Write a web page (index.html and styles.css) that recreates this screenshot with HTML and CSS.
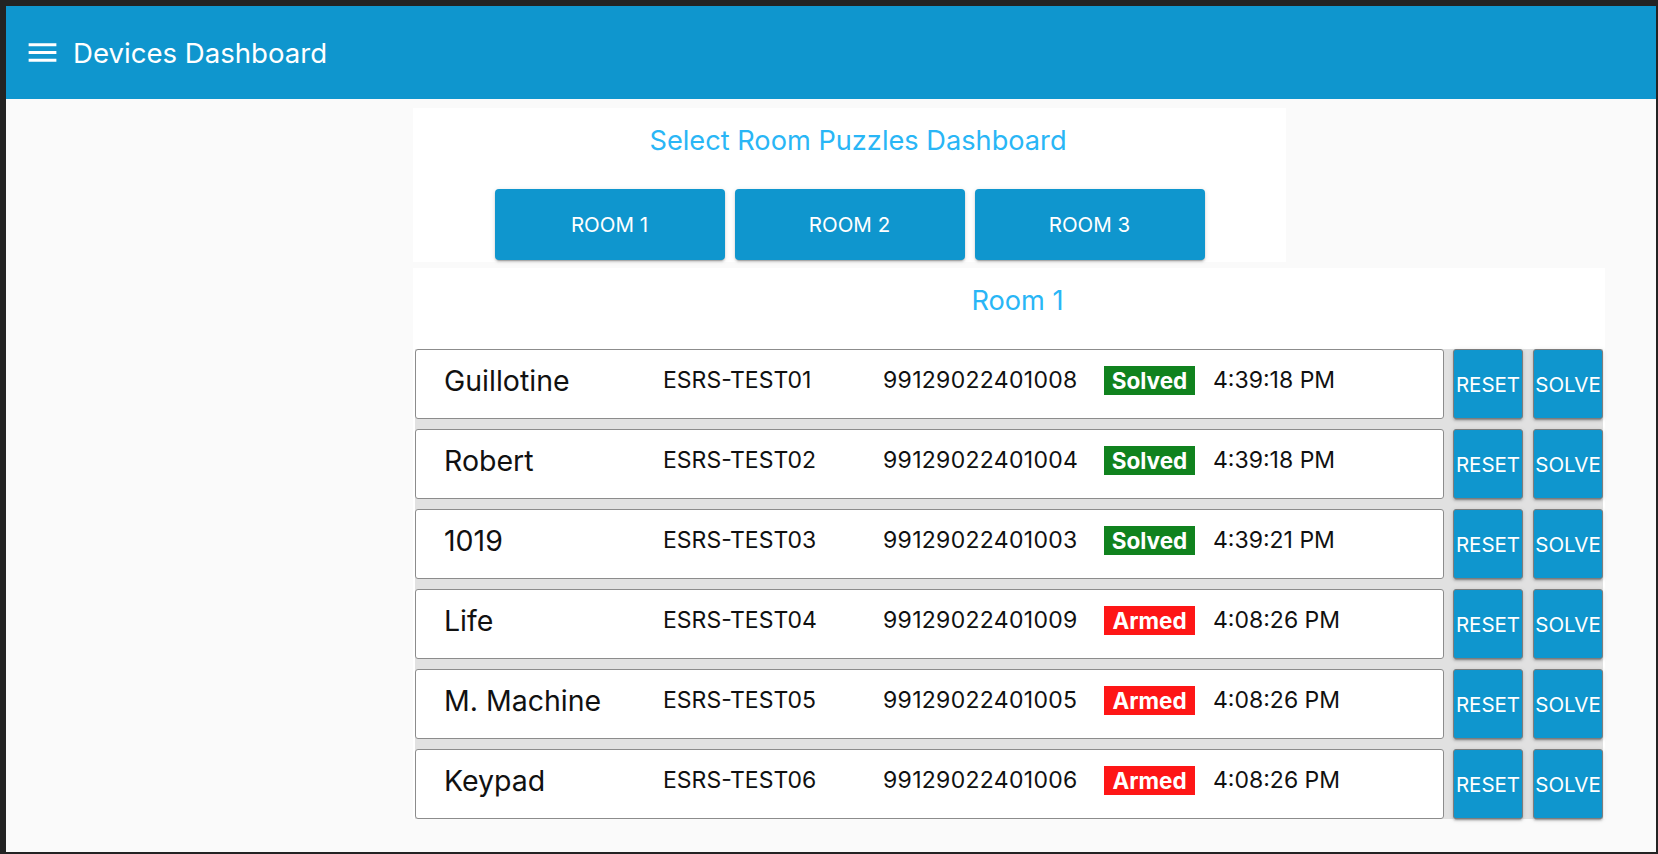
FILE: index.html
```html
<!DOCTYPE html>
<html lang="en">
<head>
<meta charset="utf-8">
<title>Devices Dashboard</title>
<link rel="stylesheet" href="styles.css">
</head>
<body>
<div class="window">
  <header class="appbar">
    <svg class="menu-icon" viewBox="0 0 24 24" aria-hidden="true"><path d="M3 18h18v-2H3v2zm0-5h18v-2H3v2zm0-7v2h18V6H3z"/></svg>
    <h1 class="appbar-title">Devices Dashboard</h1>
  </header>
  <main class="content">
    <section class="card card-select">
      <h2 class="card-title">Select Room Puzzles Dashboard</h2>
      <div class="room-buttons">
        <button class="room-btn">ROOM 1</button>
        <button class="room-btn">ROOM 2</button>
        <button class="room-btn">ROOM 3</button>
      </div>
    </section>
    <section class="card card-room">
      <h2 class="card-title">Room 1</h2>
      <div class="device-list">
        <div class="device-row">
          <div class="device">
            <span class="d-name">Guillotine</span>
            <span class="d-id">ESRS-TEST01</span>
            <span class="d-serial">99129022401008</span>
            <span class="badge solved">Solved</span>
            <span class="d-time">4:39:18 PM</span>
          </div>
          <button class="act-btn">RESET</button>
          <button class="act-btn">SOLVE</button>
        </div>
        <div class="device-row">
          <div class="device">
            <span class="d-name">Robert</span>
            <span class="d-id">ESRS-TEST02</span>
            <span class="d-serial">99129022401004</span>
            <span class="badge solved">Solved</span>
            <span class="d-time">4:39:18 PM</span>
          </div>
          <button class="act-btn">RESET</button>
          <button class="act-btn">SOLVE</button>
        </div>
        <div class="device-row">
          <div class="device">
            <span class="d-name">1019</span>
            <span class="d-id">ESRS-TEST03</span>
            <span class="d-serial">99129022401003</span>
            <span class="badge solved">Solved</span>
            <span class="d-time">4:39:21 PM</span>
          </div>
          <button class="act-btn">RESET</button>
          <button class="act-btn">SOLVE</button>
        </div>
        <div class="device-row">
          <div class="device">
            <span class="d-name">Life</span>
            <span class="d-id">ESRS-TEST04</span>
            <span class="d-serial">99129022401009</span>
            <span class="badge armed">Armed</span>
            <span class="d-time">4:08:26 PM</span>
          </div>
          <button class="act-btn">RESET</button>
          <button class="act-btn">SOLVE</button>
        </div>
        <div class="device-row">
          <div class="device">
            <span class="d-name">M. Machine</span>
            <span class="d-id">ESRS-TEST05</span>
            <span class="d-serial">99129022401005</span>
            <span class="badge armed">Armed</span>
            <span class="d-time">4:08:26 PM</span>
          </div>
          <button class="act-btn">RESET</button>
          <button class="act-btn">SOLVE</button>
        </div>
        <div class="device-row">
          <div class="device">
            <span class="d-name">Keypad</span>
            <span class="d-id">ESRS-TEST06</span>
            <span class="d-serial">99129022401006</span>
            <span class="badge armed">Armed</span>
            <span class="d-time">4:08:26 PM</span>
          </div>
          <button class="act-btn">RESET</button>
          <button class="act-btn">SOLVE</button>
        </div>
      </div>
    </section>
  </main>
</div>
</body>
</html>
```
FILE: styles.css
```css
* { box-sizing: border-box; }

html, body {
  margin: 0;
  padding: 0;
  background: #232323;
  font-family: "Inter", "Noto Sans", sans-serif;
}

.window {
  margin: 6px 2px 2px 6px;
  height: 846px;
  background: #fafafa;
  overflow: hidden;
}

.appbar {
  height: 93px;
  background: #0f96ce;
  display: flex;
  align-items: center;
  padding-left: 18px;
  color: #fff;
}

.menu-icon {
  width: 37px;
  height: 37px;
  fill: #fff;
  flex: none;
}

.appbar-title {
  margin: 0 0 0 12px;
  font-size: 27.6px;
  font-weight: 400;
  color: #fff;
}

.content {
  display: flex;
  flex-direction: column;
  align-items: flex-start;
  gap: 6px;
  padding: 9px 0 0 407px;
}

.card {
  background: #fff;
}

.card-title {
  margin: 0;
  padding-left: 17px;
  font-size: 27.2px;
  line-height: 30px;
  font-weight: 400;
  color: #29b6f6;
  text-align: center;
}

.card-select {
  width: 873px;
  height: 154px;
  padding-top: 18px;
}

.room-buttons {
  display: flex;
  justify-content: center;
  gap: 10px;
  margin-top: 33px;
}

.room-btn {
  width: 230px;
  height: 71px;
  border: none;
  border-radius: 4px;
  background: #0f96ce;
  color: #fff;
  font-family: inherit;
  font-size: 20.5px;
  font-weight: 400;
  box-shadow: 0 3px 1px -2px rgba(0,0,0,.2), 0 2px 2px 0 rgba(0,0,0,.14), 0 1px 5px 0 rgba(0,0,0,.12);
}

.card-room {
  width: 1192px;
  padding-top: 18px;
}

.device-list {
  margin: 33px 2px 0;
  background: #e1e1e1;
  display: flex;
  flex-direction: column;
  gap: 10px;
}

.device-row {
  display: flex;
  height: 70px;
}

.device {
  flex: 1;
  display: flex;
  align-items: center;
  padding: 0 0 8px 28px;
  background: #fff;
  border: 1px solid #8c8c8c;
  border-radius: 3px;
  color: #111;
  font-size: 23px;
  white-space: nowrap;
}

.d-name {
  width: 219px;
  font-size: 28.5px;
}

.d-id {
  width: 220px;
}

.d-serial {
  width: 221px;
  letter-spacing: 0.3px;
}

.badge {
  width: 91px;
  height: 29px;
  display: flex;
  align-items: center;
  justify-content: center;
  color: #fff;
  font-weight: 700;
  font-size: 22.5px;
}

.badge.solved { background: #10821e; }
.badge.armed { background: #fe1616; }

.d-time {
  margin-left: 18px;
}

.act-btn {
  width: 70px;
  height: 70px;
  margin-left: 9px;
  padding: 0;
  display: flex;
  align-items: center;
  justify-content: center;
  background: #0f96ce;
  border: 1px solid #7d7d7d;
  border-radius: 3px;
  color: #fff;
  font-family: inherit;
  font-size: 20.5px;
  white-space: nowrap;
  box-shadow: 0 3px 1px -2px rgba(0,0,0,.2), 0 2px 2px 0 rgba(0,0,0,.14), 0 1px 5px 0 rgba(0,0,0,.12);
}

.act-btn + .act-btn {
  margin-left: 10px;
}
```
